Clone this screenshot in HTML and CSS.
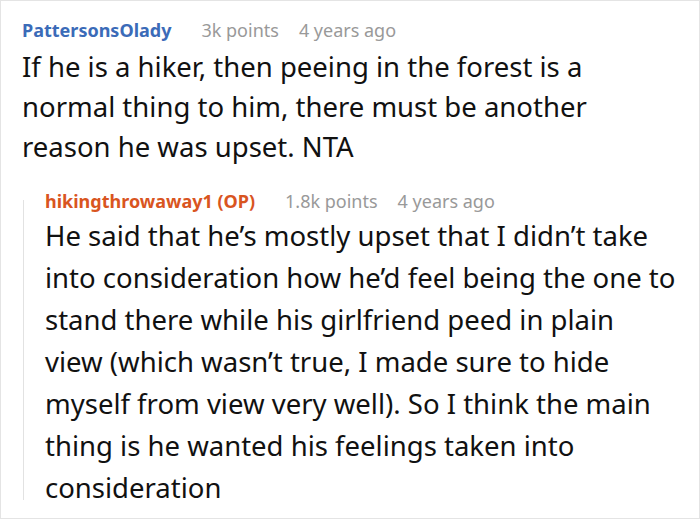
FILE: index.html
```html
<!DOCTYPE html>
<html>
<head>
<meta charset="utf-8">
<link rel="stylesheet" href="styles.css">
</head>
<body>
<div class="frame">
  <div class="comment">
    <div class="meta">
      <span class="user user-blue">PattersonsOlady</span>
      <span class="info">3k points</span>
      <span class="info">4 years ago</span>
    </div>
    <p class="text">If he is a hiker, then peeing in the forest is a<br>normal thing to him, there must be another<br>reason he was upset. NTA</p>
    <div class="reply">
      <div class="thread-line"></div>
      <div class="reply-body">
        <div class="meta">
          <span class="user user-orange">hikingthrowaway1 (OP)</span>
          <span class="info">1.8k points</span>
          <span class="info">4 years ago</span>
        </div>
        <p class="text reply-text">He said that he’s mostly upset that I didn’t take<br>into consideration how he’d feel being the one to<br>stand there while his girlfriend peed in plain<br>view (which wasn’t true, I made sure to hide<br>myself from view very well). So I think the main<br>thing is he wanted his feelings taken into<br>consideration</p>
      </div>
    </div>
  </div>
</div>
</body>
</html>
```

FILE: styles.css
```css
html, body {
  margin: 0;
  padding: 0;
  background: #fff;
}
.frame {
  width: 700px;
  height: 519px;
  box-sizing: border-box;
  border: 1px solid #e4e4e4;
  overflow: hidden;
  font-family: "Noto Sans", "Open Sans", sans-serif;
}
.comment {
  padding: 15px 2px 0 21px;
}
.meta {
  display: flex;
  gap: 20px;
  font-size: 18px;
  line-height: 28px;
}
.user {
  font-weight: bold;
  margin-right: 10px;
}
.user-blue { color: #3b6bb8; }
.user-orange { color: #d9551f; }
.info { color: #999; }
.text {
  margin: 3px 0 0;
  font-size: 27.5px;
  line-height: 40px;
  color: #111;
  white-space: nowrap;
}
.reply {
  display: flex;
  margin-top: 20px;
}
.thread-line {
  flex: none;
  width: 1px;
  margin: 13px 0 9px 1px;
  background: #e2e2e2;
}
.reply-body {
  flex: 1;
  padding-left: 21px;
}
.reply-text {
  margin-top: 0;
  line-height: 42px;
}
```
